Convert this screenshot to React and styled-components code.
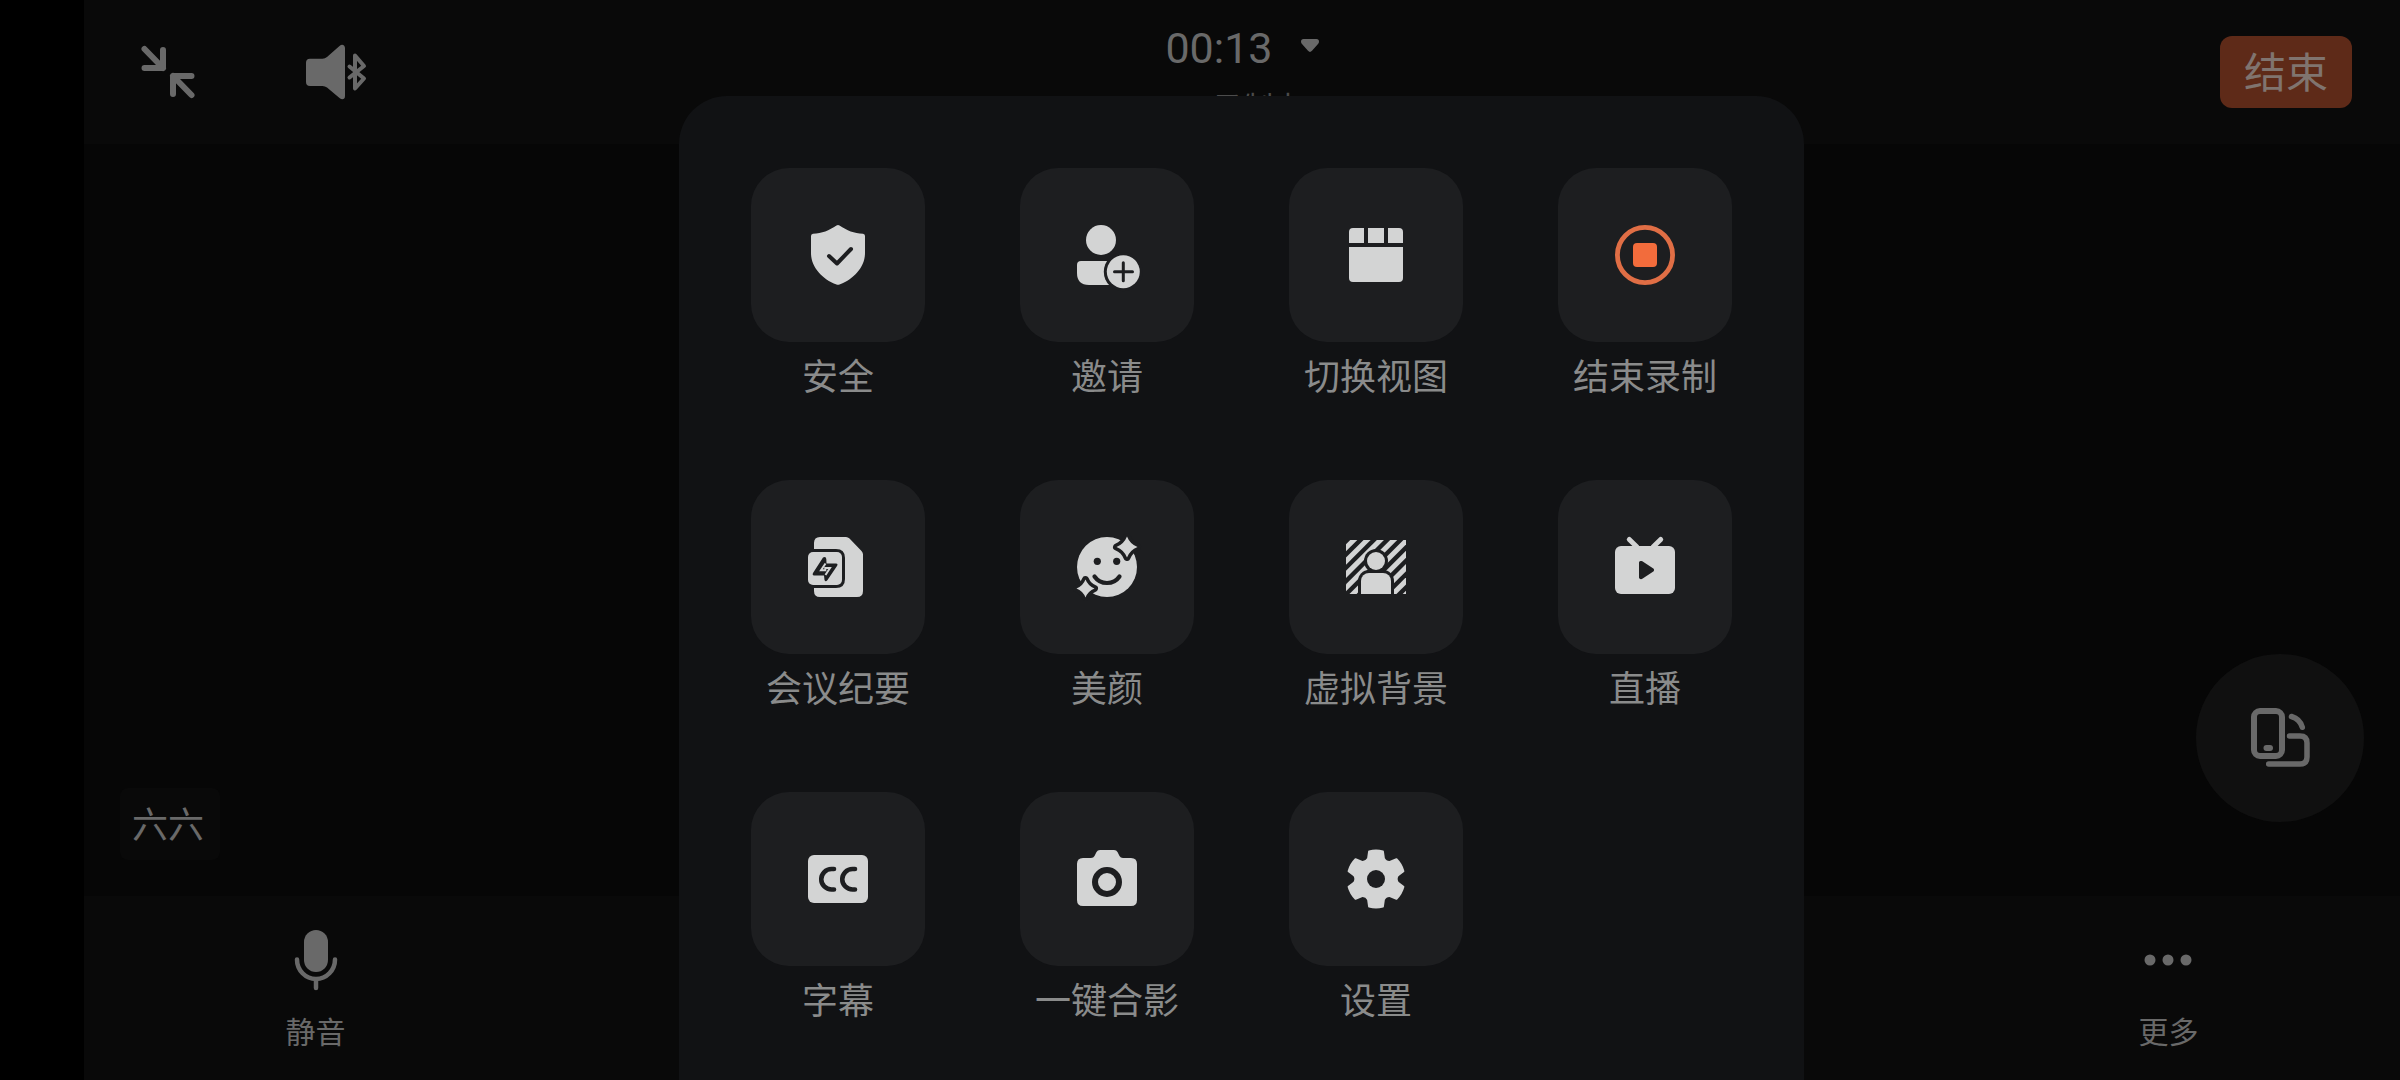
import React from "react";
import styled, { createGlobalStyle } from "styled-components";

const color = {
  edge: "#000000",
  bar: "#090909",
  stage: "#060606",
  float: "#101010",
  sheet: "#111214",
  tile: "#1d1e20",
  icon: "#d3d4d4",
  label: "#8a8b8b",
  dim: "#696969",
  faint: "#4c4c4c",
  record: "#f26c3c",
};

const GlobalStyle = createGlobalStyle`
  *, *::before, *::after { box-sizing: border-box; }
  body {
    margin: 0;
    background: ${color.edge};
    font-family: Roboto, "Noto Sans CJK SC", sans-serif;
  }
  button {
    margin: 0;
    padding: 0;
    border: 0;
    background: none;
    font-family: inherit;
    color: inherit;
    cursor: pointer;
  }
  svg { display: block; overflow: visible; }
`;

const Screen = styled.div`
  position: relative;
  display: grid;
  grid-template-rows: auto 1fr auto;
  min-height: 100vh;
  padding-left: 84px;
  overflow: hidden;
  color: ${color.dim};
`;

const TopBar = styled.header`
  display: grid;
  grid-template-columns: 1fr auto 1fr;
  height: 144px;
  background: ${color.bar};
`;

const Tools = styled.div`
  display: flex;
  align-items: center;
  justify-content: ${(p) => (p.$end ? "flex-end" : "flex-start")};
  gap: 108px;
  padding: ${(p) => (p.$end ? "0 48px 0 0" : "0 0 0 54px")};
`;

const Meeting = styled.div`
  display: flex;
  flex-direction: column;
  align-items: center;
  gap: 10px;
  padding-top: 18px;
`;

const Timer = styled.button`
  display: flex;
  align-items: center;
  gap: 28px;
  font-size: 43px;
  line-height: 60px;

  svg { margin-bottom: 6px; }
`;

const Recording = styled.div`
  display: flex;
  align-items: center;
  gap: 16px;
  color: ${color.faint};
  font-size: 30px;
  line-height: 40px;
`;

const RecordDot = styled.span`
  width: 16px;
  height: 16px;
  border-radius: 50%;
  background: #5e2a18;
`;

const EndButton = styled.button`
  width: 132px;
  height: 72px;
  padding-top: 4px;
  border-radius: 12px;
  background: #5e2a18;
  color: #80746f;
  font-size: 42px;
  line-height: 68px;
`;

const Stage = styled.main`
  display: flex;
  align-items: flex-end;
  justify-content: space-between;
  padding: 36px;
  background: ${color.stage};
`;

const NameTag = styled.div`
  padding: 4px 16px 0 12px;
  border-radius: 8px;
  background: ${color.bar};
  font-size: 36px;
  line-height: 68px;
`;

const RotateButton = styled.button`
  display: grid;
  place-items: center;
  width: 168px;
  height: 168px;
  margin-bottom: 38px;
  border-radius: 50%;
  background: ${color.float};
`;

const BottomBar = styled.footer`
  display: grid;
  grid-template-columns: repeat(5, 1fr);
  background: ${color.bar};
`;

const BarButton = styled.button`
  grid-column: ${(p) => p.$column};
  display: flex;
  flex-direction: column;
  align-items: center;
  gap: 23px;
  padding: 34px 0 27px;
  font-size: 30px;
  line-height: 40px;
`;

const Overlay = styled.div`
  position: absolute;
  inset: 0 0 0 83px;
  display: flex;
  align-items: flex-end;
  justify-content: center;
`;

const Sheet = styled.section`
  display: grid;
  grid-template-columns: repeat(4, 174px);
  gap: 75px 95px;
  padding: 72px 72px 51px;
  border-radius: 48px 48px 0 0;
  background: ${color.sheet};
`;

const Action = styled.button`
  display: flex;
  flex-direction: column;
  align-items: center;
  gap: 9px;
  color: ${color.label};
  font-size: 36px;
  line-height: 54px;
  white-space: nowrap;
`;

const Tile = styled.span`
  display: grid;
  place-items: center;
  width: 174px;
  height: 174px;
  border-radius: 38px;
  background: ${color.tile};
  color: ${color.icon};
`;

const Icon = ({ children }) => (
  <svg width="60" height="60" viewBox="0 0 60 60" fill="currentColor" aria-hidden="true">
    {children}
  </svg>
);

const line = (width, stroke = "currentColor") => ({
  fill: "none",
  stroke,
  strokeWidth: width,
  strokeLinecap: "round",
  strokeLinejoin: "round",
});

const MinimizeIcon = () => (
  <Icon>
    <path {...line(6)} d="M6.5 7 25 26M25 8V26H6.500M53.500 53 35 34M35 52V34H53.500" />
  </Icon>
);

const SpeakerIcon = () => (
  <Icon>
    <path d="M4 13.700H16.500Q19 13.700 21 12L33.500 1Q36 -1 38 .5Q39 1.500 39 3V51Q39 53 38 53.800Q36 55 33.500 53L21 42.500Q19 41 16.500 41H4Q0 41 0 37V17.700Q0 13.700 4 13.700Z" transform="translate(0 3)" />
    <path {...line(4)} d="M43.500 24.500 58 36.500 49 46.500V13.500L58 24 43.500 35.500" />
  </Icon>
);

const CaretIcon = () => (
  <svg width="18" height="13" viewBox="0 0 18 13" fill="currentColor" aria-hidden="true">
    <path d="M2.500 0H15.500Q18 0 18 2.500Q18 4 17 5L11 11.800Q9 14 7 11.800L1 5Q0 4 0 2.500Q0 0 2.500 0Z" />
  </svg>
);

const RotateIcon = () => (
  <Icon>
    <rect {...line(6)} x="4" y="3" width="28" height="45" rx="6" />
    <path {...line(6)} d="M16.500 40H20" />
    <path {...line(5.5)} d="M41.500 8.500Q50 11 52.300 19.300" />
    <path {...line(5.5)} d="M39.500 28H50Q57 28 57 35V49Q57 56 50 56H18.700" />
  </Icon>
);

const MicIcon = () => (
  <Icon>
    <rect x="18" y="0" width="24" height="42" rx="12" />
    <path {...line(4.5)} d="M11 29.500A19 19.500 0 0 0 49 29.500M30 49V58" />
  </Icon>
);

const MoreIcon = () => (
  <Icon>
    <circle cx="12" cy="30" r="5.500" />
    <circle cx="30" cy="30" r="5.500" />
    <circle cx="48" cy="30" r="5.500" />
  </Icon>
);

const ShieldIcon = () => (
  <Icon>
    <path d="M28.500 .5Q30 -.3 31.500 .5C39 5.500 46 8.500 55 8.800Q57 9 57 11V28C57 42 46 54 31.500 59.600Q30 60 28.500 59.600C14 54 3 42 3 28V11Q3 9 5 8.800C14 8.500 21 5.500 28.500 .5Z" />
    <path {...line(4, color.tile)} d="M21 31 29 38.500 43 24" />
  </Icon>
);

const InviteIcon = () => (
  <Icon>
    <circle cx="24" cy="15" r="15" />
    <path d="M4 36H36V60H12Q0 60 0 48V40Q0 36 4 36Z" />
    <circle cx="46.300" cy="46.700" r="19.500" fill={color.tile} />
    <circle cx="46.300" cy="46.700" r="16.500" />
    <path {...line(3, color.tile)} d="M37.500 46.700H55.500M46.300 37.700V55.700" />
  </Icon>
);

const ViewIcon = () => (
  <Icon>
    <path d="M7 3H18V18H3V7Q3 3 7 3ZM22 3H38V18H22ZM42 3H53Q57 3 57 7V18H42ZM3 22H57V53Q57 57 53 57H7Q3 57 3 53Z" />
  </Icon>
);

const StopRecordIcon = () => (
  <Icon>
    <circle cx="30" cy="30" r="27.600" fill="none" stroke="#e06e45" strokeWidth="4.800" />
    <rect x="18" y="18" width="24" height="24" rx="4" fill={color.record} />
  </Icon>
);

const MinutesIcon = () => (
  <Icon>
    <path d="M12 0H38Q40 0 41.500 1.500L53.500 14Q55 15.500 55 17.500V54Q55 60 49 60H12Q6 60 6 54V6Q6 0 12 0Z" />
    <path fill={color.tile} d="M0 12H28Q37 12 37 21V42Q37 51 28 51H0Z" />
    <rect x="0" y="15" width="34" height="33" rx="5" />
    <path
      fill={color.tile}
      d="M15 20.500Q18 19 18.300 22L18.500 26.500H28Q30.500 27 29 29L19.500 43Q17.500 45.500 16.500 43L16 38.500H6Q4 38 5 36Z"
    />
    <path
      fill="none"
      stroke="currentColor"
      strokeWidth="2"
      d="M17.500 26.500 13 33.300H17.300V31H22L17.500 38"
    />
  </Icon>
);

const BeautyIcon = () => {
  const star = (x, y, r) => {
    const k = r * 0.28;
    return `M${x} ${y - r}Q${x + k} ${y - k} ${x + r} ${y}Q${x + k} ${y + k} ${x} ${y + r}Q${x - k} ${y + k} ${x - r} ${y}Q${x - k} ${y - k} ${x} ${y - r}Z`;
  };
  const big = star(50, 10, 10.5);
  const small = star(8.5, 51.5, 9);
  return (
    <Icon>
      <circle cx="30" cy="30" r="30" />
      <circle cx="20.300" cy="24.300" r="3.600" fill={color.tile} />
      <circle cx="39.700" cy="24.300" r="3.600" fill={color.tile} />
      <path {...line(4.2, color.tile)} d="M17.500 39.500Q22 46 30 46T42.500 39.500" />
      <path {...line(7, color.tile)} d={big} />
      <path {...line(7, color.tile)} d={small} />
      <path d={big} />
      <path d={small} />
    </Icon>
  );
};

const stripes = [0, 1, 2, 3, 4, 5, 6, 7, 8].map((k) => 10.8 + k * 13.3);

const BackgroundIcon = () => (
  <Icon>
    <clipPath id="backdrop">
      <rect x="0" y="3" width="60" height="54" />
    </clipPath>
    <g clipPath="url(#backdrop)">
      {stripes.map((sum) => (
        <path
          key={sum}
          stroke="currentColor"
          strokeWidth="5"
          d={`M${sum + 10} -10L${sum - 70} 70`}
        />
      ))}
      <circle cx="30" cy="24" r="12" fill={color.tile} />
      <rect x="12" y="33" width="36" height="40" rx="11" fill={color.tile} />
      <circle cx="30" cy="24" r="9" />
      <rect x="15" y="36" width="30" height="40" rx="8" />
    </g>
  </Icon>
);

const LiveIcon = () => (
  <Icon>
    <path {...line(5)} d="M14.300 2.500 22 10M45.700 2.500 38 10" />
    <rect x="0" y="9" width="60" height="48" rx="6" />
    <path
      {...line(3, color.tile)}
      fill={color.tile}
      d="M25.500 25.500V40.500Q26 41 26.500 40.500L37.500 33.300V32.700L26.500 25.500Z"
    />
  </Icon>
);

const CaptionIcon = () => (
  <Icon>
    <rect x="0" y="6" width="60" height="48" rx="6" />
    <path
      {...line(4.6, color.tile)}
      d="M26 20H23.500A10 10 0 0 0 23.500 40.500H26M47 20H44.500A10 10 0 0 0 44.500 40.500H47"
    />
  </Icon>
);

const CameraIcon = () => (
  <Icon>
    <path d="M6 9H14Q16.500 9 17.500 7L19.500 3Q20.500 1 23 1H37Q39.500 1 40.500 3L42.500 7Q43.500 9 46 9H54Q60 9 60 15V51Q60 57 54 57H6Q0 57 0 51V15Q0 9 6 9Z" />
    <circle cx="30" cy="33" r="12" fill="none" stroke={color.tile} strokeWidth="6" />
  </Icon>
);

const polar = (radius, degrees) => {
  const a = (degrees * Math.PI) / 180;
  return `${(30 + radius * Math.cos(a)).toFixed(2)} ${(30 + radius * Math.sin(a)).toFixed(2)}`;
};

const gearPath =
  [0, 1, 2, 3, 4, 5]
    .map((i) => {
      const t = i * 60 - 90;
      return `${i ? "L" : "M"}${polar(28.5, t - 14)}Q${polar(29.5, t)} ${polar(28.5, t + 14)}L${polar(22, t + 21)}Q${polar(19.5, t + 30)} ${polar(22, t + 39)}`;
    })
    .join("") + "Z";

const SettingsIcon = () => (
  <Icon>
    <path d={gearPath} stroke="currentColor" strokeWidth="2" strokeLinejoin="round" />
    <circle cx="30" cy="30" r="9" fill={color.tile} />
  </Icon>
);

const actions = [
  ["安全", ShieldIcon],
  ["邀请", InviteIcon],
  ["切换视图", ViewIcon],
  ["结束录制", StopRecordIcon],
  ["会议纪要", MinutesIcon],
  ["美颜", BeautyIcon],
  ["虚拟背景", BackgroundIcon],
  ["直播", LiveIcon],
  ["字幕", CaptionIcon],
  ["一键合影", CameraIcon],
  ["设置", SettingsIcon],
];

export default function App() {
  return (
    <>
      <GlobalStyle />
      <Screen>
        <TopBar>
          <Tools>
            <button type="button" aria-label="最小化">
              <MinimizeIcon />
            </button>
            <button type="button" aria-label="扬声器">
              <SpeakerIcon />
            </button>
          </Tools>
          <Meeting>
            <Timer type="button">
              00:13
              <CaretIcon />
            </Timer>
            <Recording>
              <RecordDot />
              录制中
            </Recording>
          </Meeting>
          <Tools $end>
            <EndButton type="button">结束</EndButton>
          </Tools>
        </TopBar>
        <Stage>
          <NameTag>六六</NameTag>
          <RotateButton type="button" aria-label="旋转屏幕">
            <RotateIcon />
          </RotateButton>
        </Stage>
        <BottomBar>
          <BarButton type="button" $column={1}>
            <MicIcon />
            静音
          </BarButton>
          <BarButton type="button" $column={5}>
            <MoreIcon />
            更多
          </BarButton>
        </BottomBar>
        <Overlay>
          <Sheet role="dialog" aria-label="更多">
            {actions.map(([label, Glyph]) => (
              <Action type="button" key={label}>
                <Tile>
                  <Glyph />
                </Tile>
                {label}
              </Action>
            ))}
          </Sheet>
        </Overlay>
      </Screen>
    </>
  );
}
